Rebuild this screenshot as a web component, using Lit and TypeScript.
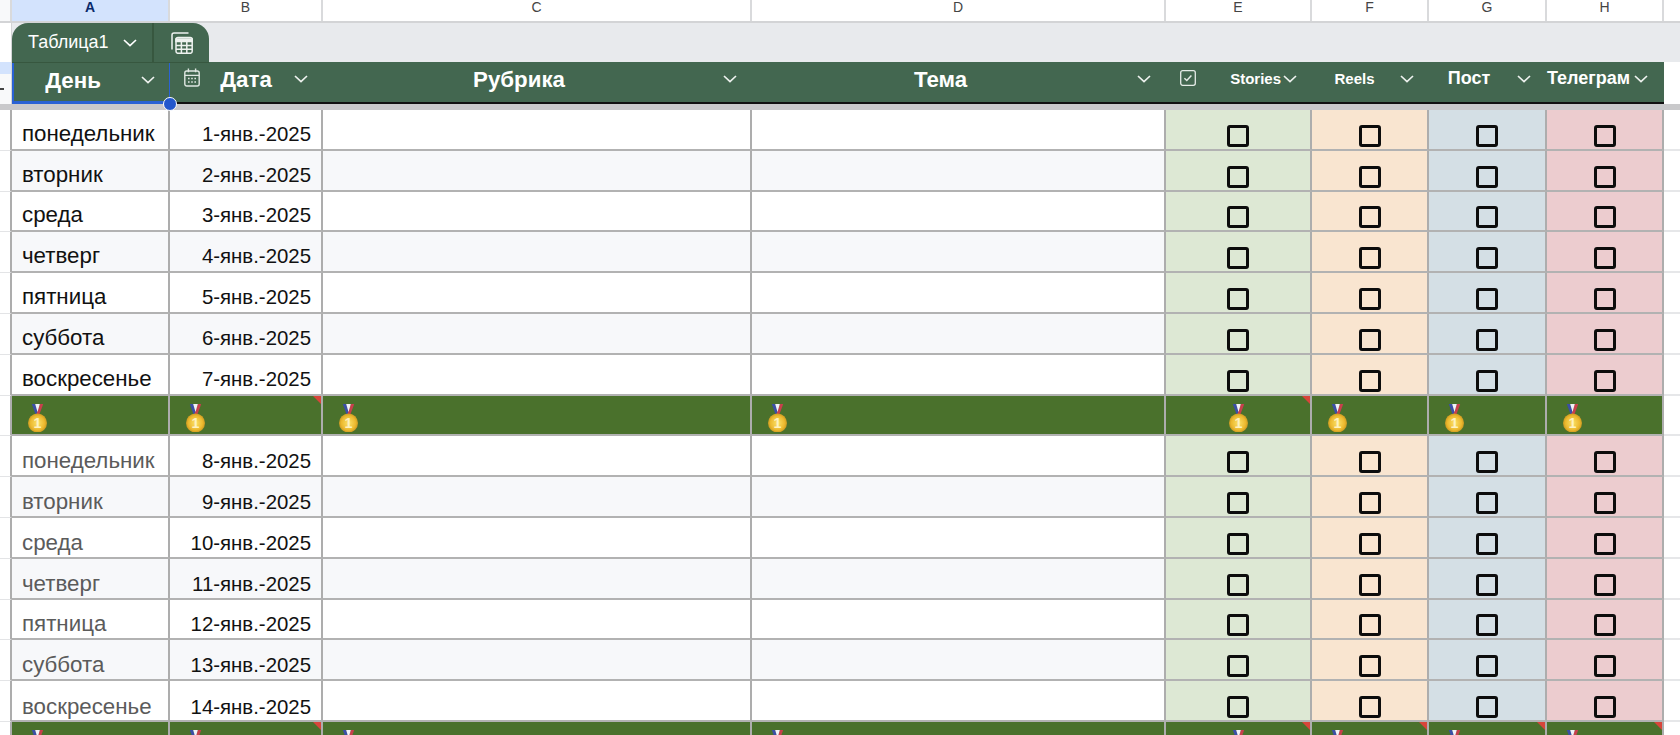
import { LitElement, html, css, svg } from "lit";
import { customElement } from "lit/decorators.js";

const chevron = html`<svg class="chev" viewBox="0 0 14 8"><path d="M1 1l6 5.6L13 1" fill="none" stroke="currentColor" stroke-width="1.7"/></svg>`;

const medal = (numbered: boolean) => html`<svg class="medal" viewBox="0 0 18 27">
  <defs><radialGradient id="g" cx="50%" cy="50%" r="62%"><stop offset="0" stop-color="#fbe26a"/><stop offset=".6" stop-color="#ecb92e"/><stop offset="1" stop-color="#b07c14"/></radialGradient></defs>
  <path d="M3.6 0h3.2l3.4 10.5H7.4z" fill="#3b4fa6"/><path d="M14.4 0h-3.2L7.8 10.5h2.8z" fill="#c8404c"/><path d="M6.8 0h4.4L9 7.6z" fill="#f1f2f8"/>
  <circle cx="9" cy="18" r="9" fill="url(#g)"/>
  ${numbered ? svg`<text x="9" y="23" text-anchor="middle" font-size="13.5" font-weight="700" font-family="Liberation Sans, sans-serif" fill="#fdf2c0">1</text>` : ""}
</svg>`;

const calIcon = html`<svg class="cal" viewBox="0 0 16 19" fill="none" stroke="#dfe7e2" stroke-width="1.4">
  <rect x=".8" y="3" width="14.4" height="15" rx="2"/><path d="M.8 7.4h14.4M4.4 .6v3.6M11.6 .6v3.6"/>
  <path d="M4 10.5h1.6M7.2 10.5h1.6M10.4 10.5h1.6M4 14h1.6M7.2 14h1.6M10.4 14h1.6" stroke-width="1.5"/>
</svg>`;

const checkIcon = html`<svg class="chk" viewBox="0 0 16 16" fill="none" stroke="#e6ece8">
  <rect x=".7" y=".7" width="14.6" height="14.6" rx="2" stroke-width="1.3"/><path d="M4.4 8.2l2.4 2.3 4.6-5" stroke-width="1.5"/>
</svg>`;

const sheetIcon = html`<svg class="sheet" viewBox="0 0 22 22" fill="none" stroke="#eef2ef" stroke-width="1.5">
  <path d="M1 17.5V3a2 2 0 0 1 2-2h14.5"/>
  <rect x="5" y="5.5" width="16.2" height="15.8" rx="2"/><path d="M5 7h16.2v2.4H5z" fill="#eef2ef"/>
  <path d="M10.4 9.5v11.8M15.8 9.5v11.8M5 13.4h16.2M5 17.3h16.2"/>
</svg>`;

const DAYS = ["понедельник", "вторник", "среда", "четверг", "пятница", "суббота", "воскресенье"];
const COLS = ["c", "d"];
const TICKS = ["e", "f", "g", "h"];

@customElement("app-root")
export class AppRoot extends LitElement {
  static styles = css`
    :host { display: block; width: 1680px; height: 735px; overflow: hidden; background: #fff; font-family: "Liberation Sans", Arial, sans-serif; color: #111; }
    .grid { display: grid; grid-template-columns: 12px 158px 153px 429px 414px 146px 117px 118px 117px 16px; }

    .letters { height: 23px; border-bottom: 2px solid #d3d4d6; box-sizing: border-box; }
    .letters > div { border-right: 2px solid #d9dadc; text-align: center; font-size: 14px; line-height: 15px; color: #444; box-sizing: border-box; }
    .letters > .sel { background: #d3e3fd; color: #0b2a6a; font-weight: 700; }
    .letters > .corner { background: #f8f9fa; }
    .letters > .end { border: 0; }

    .band { height: 39px; display: flex; background: #e8eaed; }
    .band .gut { width: 12px; background: #fff; border-right: 1px solid #d3d4d6; box-sizing: border-box; flex: none; }
    .tab { width: 197px; height: 40px; box-sizing: border-box; background: #436750; color: #fff; border-radius: 16px 16px 0 0; border-bottom: 1px solid #37573f; display: flex; align-items: center; font-size: 18px; position: relative; z-index: 2; }
    .tab .name { width: 142px; box-sizing: border-box; height: 100%; border-right: 2px solid #37573f; display: flex; align-items: center; padding-left: 16px; gap: 14px; }
    .tab .chev { color: #fff; }
    .tab .ic { flex: 1; display: flex; justify-content: center; }

    .head { height: 42px; }
    .head .gut { background: linear-gradient(#d3e3fd 0 12px, #f8f9fa 12px); border-right: 1px solid #d3d4d6; box-sizing: border-box; }
    .head .gut i { display: block; width: 4px; height: 1.5px; background: #444; margin-top: 26px; }
    .hc { background: #436750; border-bottom: 2px solid #111; box-sizing: border-box; display: flex; align-items: center; color: #fff; font-weight: 700; position: relative; padding-bottom: 5px; }
    .hc .lb { flex: 1; text-align: center; font-size: 22.3px; white-space: nowrap; padding-right: 8px; }
    .hc .chev { margin: 0 15px 2px 0; }
    .hc.a { border-bottom: 0; }
    .hc.a .lb { padding-right: 7px; }
    .hc.b { padding-left: 14px; }
    .hc.b .lb { padding-right: 2px; }
    .hc.small { padding-bottom: 7px; }
    .hc.small .chev { margin-bottom: 0; }
    .hc.small .lb { font-size: 15px; padding-right: 3px; }
    .hc.small .lb.cy { font-size: 18px; padding-right: 8px; }
    .hc.e { padding-left: 14px; }
    .hc.e .lb { text-align: right; padding-right: 2px; }
    .hc.small.g .chev, .hc.small.h .chev { margin-right: 16px; }
    .hc.h .lb.cy { text-align: left; padding: 0; }
    .sel-box { position: absolute; inset: -1px -1px 0 0; border: solid #2a62d4; border-width: 0 2px 3px 2px; pointer-events: none; }
    .handle { position: absolute; right: -7px; bottom: -7px; width: 12px; height: 12px; border-radius: 50%; background: #2257cc; border: 1px solid #fff; z-index: 3; }
    .hend { background: #fff; }

    .freeze { height: 6px; background: #c9c9cb; }

    .row { height: 40.8px; }
    .cell { box-sizing: border-box; border-right: 2px solid #adadad; border-bottom: 2px solid #b2b2b2; display: flex; align-items: flex-end; padding: 0 10px 2px; font-size: 22.3px; line-height: 26px; white-space: nowrap; position: relative; }
    .row.late .cell { padding-bottom: 1px; }
    .row.late:nth-of-type(n) .cell.low { padding-bottom: 0; }
    .row.alt .cell { background: #f7f8fa; }
    .row .gut { box-sizing: border-box; border-right: 2px solid #adadad; border-bottom: 1px solid #e3e4e6; background: #fff; }
    .row .rend { box-sizing: border-box; border-bottom: 2px solid #e6e7e9; background: #fff; }
    .row .cell.day { color: #111; }
    .row.late .cell.day { color: #5b5b5b; }
    .cell.date { justify-content: flex-end; font-size: 20.4px; }
    .row .cell.tick { justify-content: center; padding: 0 0 2px; }
    .row .cell.tick.e { background: #dde8d4; }
    .row .cell.tick.f { background: #f9e5d0; }
    .row .cell.tick.g { background: #d4dfe5; }
    .row .cell.tick.h { background: #eccccf; }
    .box { width: 22px; height: 22px; box-sizing: border-box; border: 3px solid #0c0c0c; border-radius: 3px; }

    .row .cell.win { background: #4a712c; padding: 0 0 0 16px; align-items: flex-start; overflow: hidden; }
    .row .cell.win.e { justify-content: center; padding-left: 0; }
    .medal { width: 19px; height: 28.5px; margin-top: 8px; flex: none; }
    .flag::after { content: ""; position: absolute; top: 0; right: 0; border-style: solid; border-width: 0 8px 8px 0; border-color: transparent #d8453b transparent transparent; }

    .chev { width: 14px; height: 8px; flex: none; color: #eef2ef; }
    .cal { width: 16px; height: 19px; flex: none; margin-bottom: 4px; }
    .chk { width: 16px; height: 16px; flex: none; margin-bottom: 1px; }
    .sheet { width: 22px; height: 22px; }
  `;

  private winRow(flags: string[], numbered: boolean) {
    const cls = ["a", "b", ...COLS, ...TICKS];
    return html`<div class="grid row">
      <div class="gut"></div>
      ${cls.map((c) => html`<div class="cell win ${c} ${flags.includes(c) ? "flag" : ""}">${medal(numbered)}</div>`)}
      <div class="rend"></div>
    </div>`;
  }

  private week(start: number, late: boolean) {
    return DAYS.map((d, i) => {
      const low = late && i === 6 ? "low" : "";
      return html`<div class="grid row ${i % 2 ? "alt" : ""} ${late ? "late" : ""}">
        <div class="gut"></div>
        <div class="cell day ${low}">${d}</div>
        <div class="cell date ${low}">${start + i}-янв.-2025</div>
        ${COLS.map(() => html`<div class="cell"></div>`)}
        ${TICKS.map((t) => html`<div class="cell tick ${t}"><div class="box"></div></div>`)}
        <div class="rend"></div>
      </div>`;
    });
  }

  render() {
    return html`
      <div class="grid letters">
        <div class="corner"></div><div class="sel">A</div><div>B</div><div>C</div><div>D</div><div>E</div><div>F</div><div>G</div><div>H</div><div class="end"></div>
      </div>
      <div class="band">
        <div class="gut"></div>
        <div class="tab">
          <div class="name"><span>Таблица1</span>${chevron}</div>
          <div class="ic">${sheetIcon}</div>
        </div>
      </div>
      <div class="grid head">
        <div class="gut"><i></i></div>
        <div class="hc a"><span class="lb">День</span>${chevron}<div class="sel-box"></div><div class="handle"></div></div>
        <div class="hc b">${calIcon}<span class="lb">Дата</span>${chevron}</div>
        <div class="hc"><span class="lb">Рубрика</span>${chevron}</div>
        <div class="hc"><span class="lb">Тема</span>${chevron}</div>
        <div class="hc small e">${checkIcon}<span class="lb">Stories</span>${chevron}</div>
        <div class="hc small"><span class="lb">Reels</span>${chevron}</div>
        <div class="hc small g"><span class="lb cy">Пост</span>${chevron}</div>
        <div class="hc small h"><span class="lb cy">Телеграм</span>${chevron}</div>
        <div class="hend"></div>
      </div>
      <div class="freeze"></div>
      ${this.week(1, false)}
      ${this.winRow(["b", "e"], true)}
      ${this.week(8, true)}
      ${this.winRow(["b", "e", "f", "g", "h"], false)}
    `;
  }
}
